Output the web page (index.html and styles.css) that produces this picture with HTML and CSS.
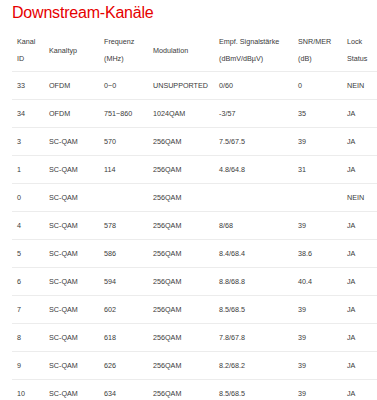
FILE: index.html
```html
<!DOCTYPE html>
<html lang="de">
<head>
<meta charset="utf-8">
<title>Downstream-Kanäle</title>
<link rel="stylesheet" href="styles.css">
</head>
<body>
<h1 class="title">Downstream-Kanäle</h1>
<table class="channels">
  <colgroup>
    <col class="c-id"><col class="c-type"><col class="c-freq"><col class="c-mod"><col class="c-pwr"><col class="c-snr"><col class="c-lock">
  </colgroup>
  <thead>
    <tr>
      <th>Kanal<br>ID</th>
      <th>Kanaltyp</th>
      <th>Frequenz<br>(MHz)</th>
      <th>Modulation</th>
      <th>Empf. Signalstärke<br>(dBmV/dBµV)</th>
      <th>SNR/MER<br>(dB)</th>
      <th>Lock<br>Status</th>
    </tr>
  </thead>
  <tbody>
    <tr><td>33</td><td>OFDM</td><td>0~0</td><td>UNSUPPORTED</td><td>0/60</td><td>0</td><td>NEIN</td></tr>
    <tr><td>34</td><td>OFDM</td><td>751~860</td><td>1024QAM</td><td>-3/57</td><td>35</td><td>JA</td></tr>
    <tr><td>3</td><td>SC-QAM</td><td>570</td><td>256QAM</td><td>7.5/67.5</td><td>39</td><td>JA</td></tr>
    <tr><td>1</td><td>SC-QAM</td><td>114</td><td>256QAM</td><td>4.8/64.8</td><td>31</td><td>JA</td></tr>
    <tr><td>0</td><td>SC-QAM</td><td></td><td>256QAM</td><td></td><td></td><td>NEIN</td></tr>
    <tr><td>4</td><td>SC-QAM</td><td>578</td><td>256QAM</td><td>8/68</td><td>39</td><td>JA</td></tr>
    <tr><td>5</td><td>SC-QAM</td><td>586</td><td>256QAM</td><td>8.4/68.4</td><td>38.6</td><td>JA</td></tr>
    <tr><td>6</td><td>SC-QAM</td><td>594</td><td>256QAM</td><td>8.8/68.8</td><td>40.4</td><td>JA</td></tr>
    <tr><td>7</td><td>SC-QAM</td><td>602</td><td>256QAM</td><td>8.5/68.5</td><td>39</td><td>JA</td></tr>
    <tr><td>8</td><td>SC-QAM</td><td>618</td><td>256QAM</td><td>7.8/67.8</td><td>39</td><td>JA</td></tr>
    <tr><td>9</td><td>SC-QAM</td><td>626</td><td>256QAM</td><td>8.2/68.2</td><td>39</td><td>JA</td></tr>
    <tr><td>10</td><td>SC-QAM</td><td>634</td><td>256QAM</td><td>8.5/68.5</td><td>39</td><td>JA</td></tr>
  </tbody>
</table>
</body>
</html>
```

FILE: styles.css
```css
html, body {
  margin: 0;
  padding: 0;
  background: #ffffff;
}
body {
  padding: 0 0 0 12px;
  font-family: "Liberation Sans", Arial, sans-serif;
  color: #3a3a3a;
}
.title {
  margin: 0;
  padding-top: 4px;
  font-family: "Liberation Sans Narrow", "Liberation Sans", sans-serif;
  font-weight: normal;
  font-size: 16px;
  letter-spacing: -0.2px;
  line-height: 18px;
  color: #e60000;
}
.channels {
  margin-top: 7px;
  width: 365px;
  border-collapse: collapse;
  table-layout: fixed;
  font-size: 7.2px;
}
.c-id { width: 32px; }
.c-type { width: 55px; }
.c-freq { width: 49px; }
.c-mod { width: 66px; }
.c-pwr { width: 79px; }
.c-snr { width: 49px; }
.c-lock { width: 35px; }
.channels th {
  font-weight: normal;
  text-align: left;
  vertical-align: middle;
  padding: 4px 0 4px 5px;
  line-height: 17px;
  height: 34px;
  border-bottom: 1px solid #ececec;
  white-space: nowrap;
}
.channels td {
  text-align: left;
  padding: 0 0 0 5px;
  height: 27px;
  line-height: 10px;
  border-bottom: 1px solid #ececec;
  white-space: nowrap;
}
```
